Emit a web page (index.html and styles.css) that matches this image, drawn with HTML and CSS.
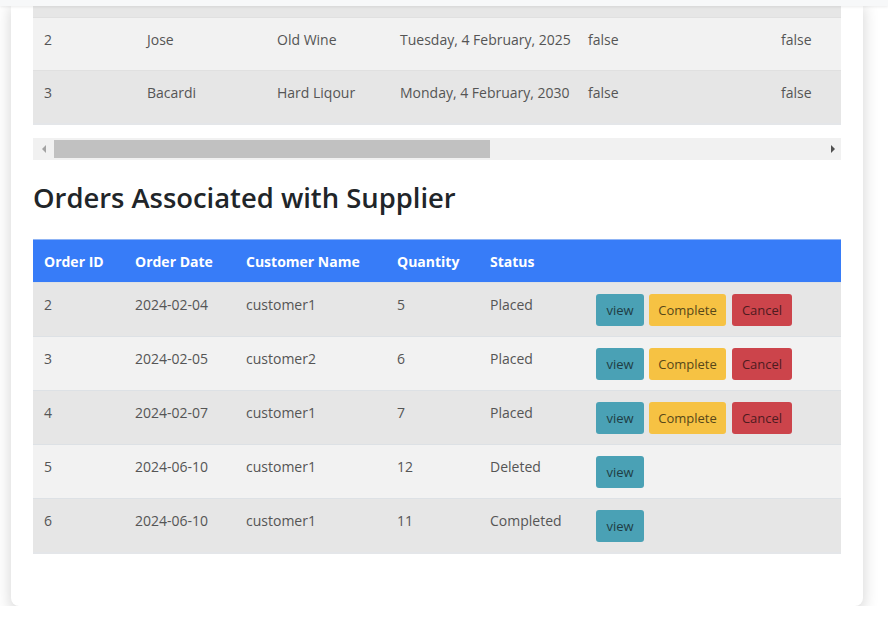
FILE: index.html
```html
<!DOCTYPE html>
<html>
<head>
<meta charset="utf-8">
<link rel="stylesheet" href="styles.css">
</head>
<body>
<div class="topbar"></div>
<main class="card">
  <div class="scroll-wrap">
    <table class="items">
      <colgroup>
        <col class="c1"><col class="c2"><col class="c3"><col class="c4"><col class="c5"><col class="c6"><col class="c7">
      </colgroup>
      <tr class="partial"><td colspan="7"></td></tr>
      <tr class="even"><td>2</td><td>Jose</td><td>Old Wine</td><td>Tuesday, 4 February, 2025</td><td>false</td><td>false</td><td></td></tr>
      <tr class="odd"><td>3</td><td>Bacardi</td><td>Hard Liqour</td><td>Monday, 4 February, 2030</td><td>false</td><td>false</td><td></td></tr>
    </table>
  </div>
  <div class="scrollbar">
    <div class="arrow left"><svg width="6" height="8" viewBox="0 0 6 8"><path d="M5 0 L1 4 L5 8 Z" fill="#a3a3a3"/></svg></div>
    <div class="track"><div class="thumb"></div></div>
    <div class="arrow right"><svg width="6" height="8" viewBox="0 0 6 8"><path d="M1 0 L5 4 L1 8 Z" fill="#505050"/></svg></div>
  </div>

  <h2 class="title">Orders Associated with Supplier</h2>

  <table class="orders">
    <colgroup>
      <col class="o1"><col class="o2"><col class="o3"><col class="o4"><col class="o5"><col class="o6">
    </colgroup>
    <thead>
      <tr><th>Order ID</th><th>Order Date</th><th>Customer Name</th><th>Quantity</th><th>Status</th><th></th></tr>
    </thead>
    <tbody>
      <tr class="odd"><td>2</td><td>2024-02-04</td><td>customer1</td><td>5</td><td>Placed</td>
        <td class="actions"><button class="btn view">view</button><button class="btn complete">Complete</button><button class="btn cancel">Cancel</button></td></tr>
      <tr class="even"><td>3</td><td>2024-02-05</td><td>customer2</td><td>6</td><td>Placed</td>
        <td class="actions"><button class="btn view">view</button><button class="btn complete">Complete</button><button class="btn cancel">Cancel</button></td></tr>
      <tr class="odd"><td>4</td><td>2024-02-07</td><td>customer1</td><td>7</td><td>Placed</td>
        <td class="actions"><button class="btn view">view</button><button class="btn complete">Complete</button><button class="btn cancel">Cancel</button></td></tr>
      <tr class="even"><td>5</td><td>2024-06-10</td><td>customer1</td><td>12</td><td>Deleted</td>
        <td class="actions"><button class="btn view">view</button></td></tr>
      <tr class="odd"><td>6</td><td>2024-06-10</td><td>customer1</td><td>11</td><td>Completed</td>
        <td class="actions"><button class="btn view">view</button></td></tr>
    </tbody>
  </table>
</main>
</body>
</html>
```

FILE: styles.css
```css
html, body {
  margin: 0;
  padding: 0;
  background: #ffffff;
  font-family: "Open Sans", "Noto Sans", sans-serif;
  color: #555;
}

.topbar {
  position: fixed;
  top: 0;
  left: 0;
  right: 0;
  height: 6px;
  background: #f7f8f9;
  box-shadow: 0 1px 3px rgba(0,0,0,0.08);
  z-index: 5;
}

.card {
  display: block;
  width: 808px;
  margin: 0 0 0 11px;
  padding: 0 22px 52px 22px;
  background: #fff;
  border-radius: 0 0 8px 8px;
  box-shadow: 0 6px 16px rgba(0,0,0,0.18);
}

.scroll-wrap {
  width: 808px;
  overflow: hidden;
  border-bottom: 2px solid #e4e6e9;
}

table {
  border-collapse: collapse;
  table-layout: fixed;
}

.items {
  width: 1500px;
  font-size: 14px;
}
.items .c1 { width: 103px; }
.items .c2 { width: 130px; }
.items .c3 { width: 123px; }
.items .c4 { width: 188px; }
.items .c5 { width: 193px; }
.items .c6 { width: 200px; }
.items td {
  padding: 0 11px;
  height: 53px;
  vertical-align: top;
  line-height: 20px;
  padding-top: 12px;
  box-sizing: border-box;
  white-space: nowrap;
  border-top: 1px solid #e0e0e0;
}
.items tr.partial td {
  height: 17px;
  padding: 0;
  border-top: none;
}
.items tr.partial { background: #e6e6e6; }
.items tr.even { background: #f2f2f2; }
.items tr.odd { background: #e6e6e6; }

.scrollbar {
  display: flex;
  height: 22px;
  margin-top: 13px;
  background: #f1f1f1;
}
.arrow {
  width: 17px;
  display: flex;
  align-items: center;
  justify-content: center;
}
.arrow.left { width: 21px; }
.track {
  flex: 1;
  display: flex;
  align-items: center;
}
.thumb {
  width: 436px;
  height: 18px;
  background: #c1c1c1;
}

.title {
  margin: 20px 0 23px 0;
  font-size: 27.4px;
  font-weight: 600;
  line-height: 36px;
  color: #212529;
}

.orders {
  width: 808px;
  font-size: 14px;
  border-bottom: 2px solid #e4e6e9;
}
.o1 { width: 91px; }
.o2 { width: 111px; }
.o3 { width: 151px; }
.o4 { width: 93px; }
.o5 { width: 106px; }
.o6 { width: 256px; }

.orders thead tr {
  background: #377cf8;
}
.orders th {
  color: #fff;
  font-weight: 700;
  text-align: left;
  padding: 1px 11px 0 11px;
  height: 41px;
  line-height: 20px;
  border-top: 1px solid #8fb4f5;
  white-space: nowrap;
}
.orders td {
  padding: 11px 11px 10px 11px;
  height: 53px;
  box-sizing: border-box;
  vertical-align: top;
  line-height: 21px;
  border-top: 1px solid #dde1e5;
  white-space: nowrap;
}
.orders tr.odd { background: #e6e6e6; }
.orders tr.even { background: #f2f2f2; }

.btn {
  display: inline-block;
  height: 32px;
  margin: 0 5px 0 0;
  padding: 0;
  border: none;
  border-radius: 3px;
  font-family: "Open Sans", "Noto Sans", sans-serif;
  font-size: 13px;
  line-height: 32px;
  vertical-align: top;
  cursor: pointer;
}
.btn.view { background: #4aa1b5; color: #1f3d44; width: 48px; }
.btn.complete { background: #f6c243; color: #574719; width: 77px; margin-right: 6px; }
.btn.cancel { background: #cc444b; color: #4e1b1f; width: 60px; }
```
